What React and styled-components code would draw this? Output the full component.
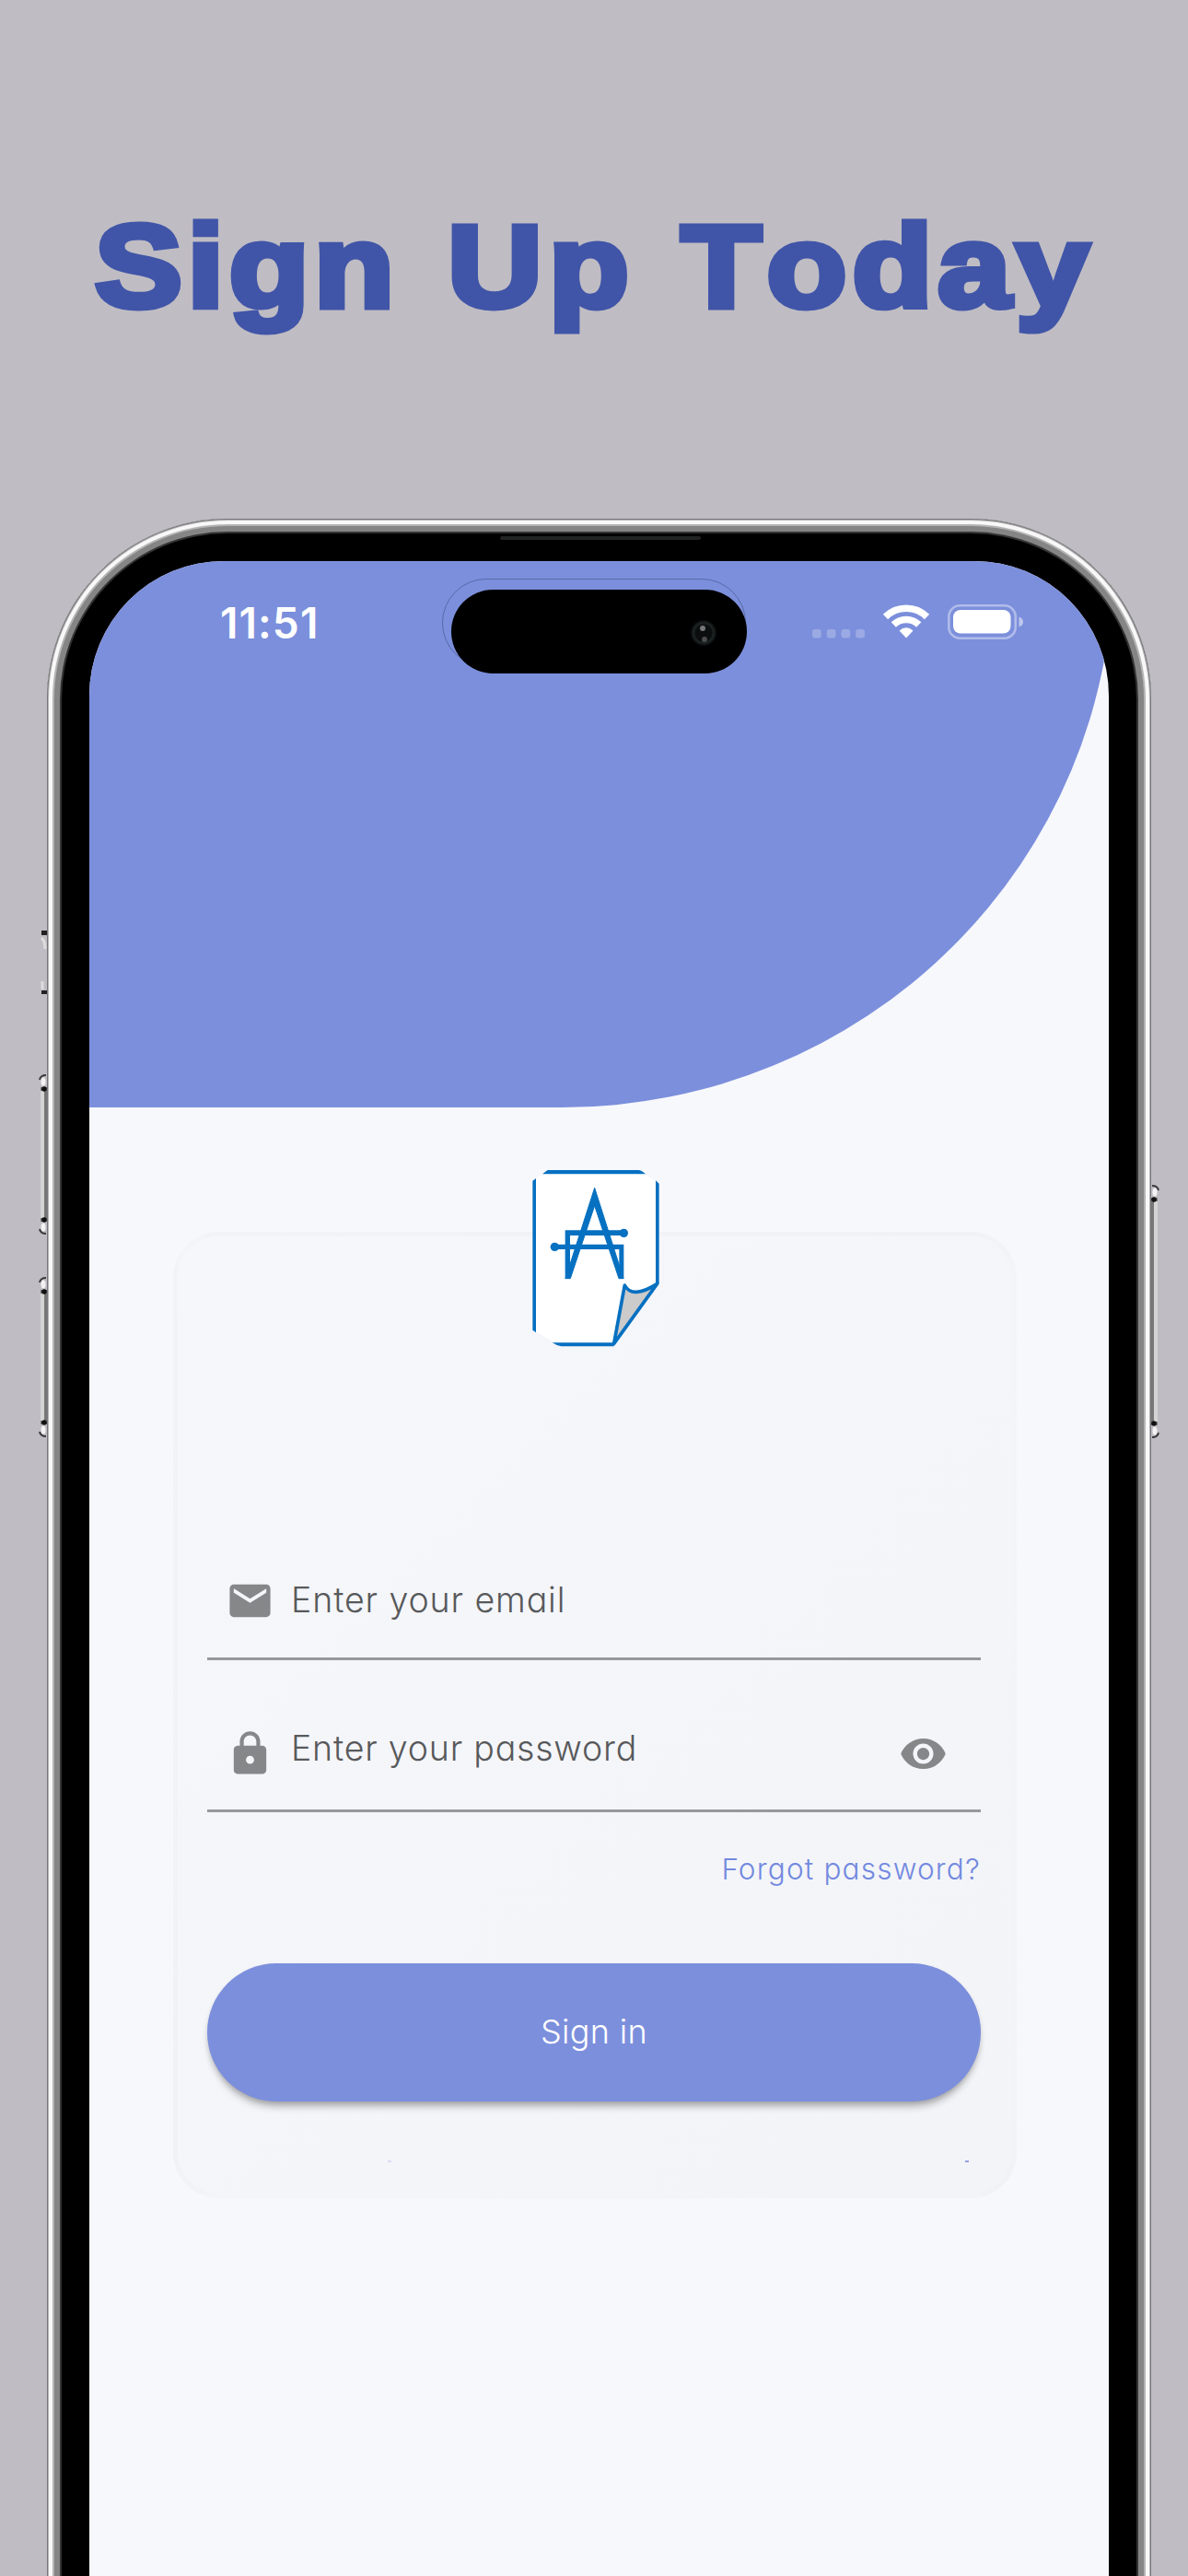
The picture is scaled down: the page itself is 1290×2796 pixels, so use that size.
import React from "react";
import styled, { createGlobalStyle } from "styled-components";
import { MdEmail, MdLock, MdVisibility } from "react-icons/md";

const Global = createGlobalStyle`
  html, body { margin: 0; padding: 0; background: #bfbcc3; }
  * { box-sizing: border-box; }
`;

const Page = styled.main`
  width: 1290px;
  height: 2796px;
  overflow: hidden;
  background: #bfbcc3;
  font-family: Inter, "Liberation Sans", sans-serif;
`;

const Title = styled.h1`
  margin: 0;
  height: 563px;
  padding: 209px 0 0 92px;
  display: flex;
  align-items: flex-start;
  color: #4055a8;
  font-family: "Liberation Sans", Arial, sans-serif;
  font-size: 127px;
  line-height: 160px;
  font-weight: 700;
  font-kerning: none;
  -webkit-text-stroke: 7px #4055a8;
  stroke-linejoin: round;
  transform: scaleX(1.12);
  transform-origin: 0 0;
`;

const Word = styled.span`
  flex: none;
  width: ${(p) => p.$width}px;
  letter-spacing: ${(p) => p.$tracking}px;
  white-space: nowrap;
`;

const Phone = styled.section`
  position: relative;
  width: 1199px;
  height: 2500px;
  margin-left: 51px;
  padding: 46px 46px 0;
  border-radius: 196px 196px 0 0;
  background: #000;
  box-shadow: inset 0 0 0 1px #77767a, inset 0 0 0 2px #b5b5b5, inset 0 0 0 6px #f8f8f8,
    inset 0 0 0 8px #b4b4b4, inset 0 0 0 14px #858585, inset 0 0 0 16px #333;
`;

const Speaker = styled.div`
  position: absolute;
  left: 492px;
  top: 19px;
  width: 218px;
  height: 4px;
  border-radius: 2px;
  background: #222423;
`;

const Key = styled.svg`
  position: absolute;
  ${(p) => (p.$side === "left" ? "left: -9px" : "right: -9px; transform: scaleX(-1)")};
  top: ${(p) => p.$top}px;
`;

const Screen = styled.div`
  width: 1107px;
  height: 2400px;
  overflow: hidden;
  border-radius: 146px 146px 0 0;
  background: #f7f8fc;
`;

const Header = styled.div`
  width: 1112px;
  height: 593px;
  border-bottom-right-radius: 599px 593px;
  background: #7c8fdc;
`;

const StatusBar = styled.div`
  position: relative;
  display: flex;
  height: 130px;
  padding-top: 46px;
`;

const Time = styled.time`
  width: 248px;
  margin-left: 142px;
  color: #fff;
  font-size: 46px;
  line-height: 42px;
  font-weight: 600;
  letter-spacing: 1.1px;
`;

const IslandRing = styled.div`
  position: absolute;
  left: 383px;
  top: 19px;
  width: 330px;
  height: 96px;
  border: 1px solid #5969a8;
  border-radius: 48px;
`;

const Island = styled.div`
  position: relative;
  width: 321px;
  height: 91px;
  margin: -15px 0 0 3px;
  border-radius: 46px;
  background: #000;
`;

const Camera = styled.svg`
  position: absolute;
  left: 256px;
  top: 29px;
`;

const StatusIcons = styled.svg`
  margin-left: 70px;
`;

const Card = styled.div`
  position: relative;
  display: flex;
  flex-direction: column;
  width: 916px;
  height: 1049px;
  margin: 135px 0 0 91px;
  padding: 329px 34px 0 32px;
  border: 5px solid rgba(232, 232, 236, 0.15);
  border-radius: 50px;
  background: linear-gradient(135deg, #f6f7fb, #f3f4f8);
`;

const Logo = styled.svg`
  position: absolute;
  left: 367px;
  top: -92px;
`;

const Field = styled.label`
  display: flex;
  align-items: center;
  height: ${(p) => p.$height}px;
  padding: ${(p) => p.$pad};
  border-bottom: 3px solid #97989c;
  color: #868789;
  svg { flex: none; }
`;

const Hint = styled.span`
  flex: 1;
  margin-left: 18px;
  color: #58595b;
  font-size: 37.5px;
  line-height: 44px;
  font-weight: 330;
  font-feature-settings: "cv11" 1;
  letter-spacing: ${(p) => p.$tracking}px;
  white-space: nowrap;
  transform: translateY(${(p) => p.$shift}px);
`;

const Forgot = styled.a`
  align-self: flex-end;
  margin-top: 43px;
  color: #7389df;
  font-size: 31.5px;
  line-height: 38px;
  font-weight: 330;
  font-feature-settings: "cv11" 1;
  letter-spacing: 1.2px;
`;

const SignIn = styled.button`
  height: 150px;
  margin-top: 83px;
  padding: 0 0 3px;
  border: 0;
  border-radius: 75px;
  background: #7c8fdc;
  box-shadow: 0 8px 9px -3px rgba(0, 0, 0, 0.3), 0 2px 5px rgba(0, 0, 0, 0.08);
  color: #fff;
  font-family: inherit;
  font-size: 36px;
  font-weight: 350;
  letter-spacing: 0.3px;
`;

const Marks = styled.div`
  display: flex;
  justify-content: space-between;
  margin: 64px 13px 0 196px;
`;

const Mark = styled.i`
  width: 4px;
  height: 2px;
  background: ${(p) => p.$color};
`;

function SideKey({ side, top, height: h }) {
  return (
    <Key $side={side} $top={top} width="9" height={h} viewBox={`0 0 9 ${h}`}>
      <rect x="2" y="14" width="7" height={h - 28} fill="#777" />
      <rect x="2" y="18" width="4" height={h - 36} fill="#d4d4d4" />
      <path d="M1 6Q2 1 8 1" fill="none" stroke="#3b3b3b" strokeWidth="2" />
      <ellipse cx="5" cy="8" rx="2.5" ry="4.5" fill="#f2f2f2" />
      <circle cx="6" cy="16" r="2.8" fill="#111" />
      <circle cx="6" cy={h - 16} r="2.8" fill="#111" />
      <ellipse cx="5" cy={h - 8} rx="2.5" ry="4.5" fill="#f2f2f2" />
      <path d={`M1 ${h - 6}Q2 ${h - 1} 8 ${h - 1}`} fill="none" stroke="#3b3b3b" strokeWidth="2" />
    </Key>
  );
}

function MuteSwitch() {
  return (
    <Key $side="left" $top={447} width="9" height="70" viewBox="0 0 9 70">
      <rect x="3" y="0" width="6" height="5" fill="#222" />
      <path d="M3 8Q7 11 7 20" fill="none" stroke="#ddd" strokeWidth="3" />
      <path d="M4 55V64" stroke="#ddd" strokeWidth="3" />
      <rect x="3" y="65" width="6" height="4" fill="#222" />
    </Key>
  );
}

function StatusGlyphs() {
  return (
    <StatusIcons width="232" height="42" viewBox="0 0 232 42">
      <g fill="#fff" opacity="0.24">
        {[1, 16.7, 32.5, 48.2].map((x) => (
          <rect key={x} x={x} y="28" width="9.8" height="9.5" rx="3" />
        ))}
      </g>
      <g fill="none" stroke="#fff" strokeWidth="7.6">
        <path d="M80.500 14.500A32 32 0 0 1 125.500 14.500" />
        <path d="M89.300 23A19.800 19.800 0 0 1 116.700 23" />
      </g>
      <path d="M95.500 29.600Q103 23 110.500 29.600L103 37.500Z" fill="#fff" />
      <rect x="149.300" y="2.300" width="72.400" height="35.400" rx="12" fill="none" stroke="#fff" strokeWidth="2.600" opacity="0.4" />
      <rect x="154" y="7" width="62.500" height="25.500" rx="8" fill="#fff" />
      <path d="M225.500 14.500Q230 16 230 20T225.500 25.500Z" fill="#fff" opacity="0.5" />
    </StatusIcons>
  );
}

function BrandLogo() {
  return (
    <Logo width="180" height="230" viewBox="0 0 540 690">
      <path d="M104 62H405L466 104V430L319 632H148L56 582V94Z" fill="#fff" />
      <g fill="#0670c1">
        <path d="M104 60H402Q415 64 423 73H87Z" />
        <path d="M55 95L66 87V589L55 581Z" />
        <path d="M456 94L467 104V430H456Z" />
        <path d="M119 622H320V634H148Q134 632 119 622Z" />
      </g>
      <path d="M355 435Q379 482 461 430L320 625Z" fill="#cbcbcb" stroke="#0670c1" strokeWidth="11" strokeLinejoin="round" />
      <g fill="#0670c1">
        <path d="M257 118L351 413H336L257 176L178 413H162Z" stroke="#0670c1" strokeWidth="3" />
        <path d="M161 256H352V273H177V414H161Z" />
        <path d="M126 302H352V414H337V318H126Z" />
        <circle cx="352" cy="265" r="14" />
        <circle cx="127" cy="310" r="14" />
      </g>
    </Logo>
  );
}

export default function App() {
  return (
    <Page>
      <Global />
      <Title>
        <Word $width={342} $tracking={5}>Sign</Word>
        <Word $width={226.5} $tracking={6.5}>Up</Word>
        <Word $width={410} $tracking={5.3}>Today</Word>
      </Title>
      <Phone>
        <Speaker />
        <MuteSwitch />
        <SideKey side="left" top={603} height={174} />
        <SideKey side="left" top={823} height={174} />
        <SideKey side="right" top={723} height={275} />
        <Screen>
          <Header>
            <StatusBar>
              <Time>11:51</Time>
              <IslandRing />
              <Island>
                <Camera width="36" height="36" viewBox="0 0 36 36">
                  <circle cx="18" cy="18" r="14" fill="#0b0e0e" />
                  <circle cx="18" cy="18" r="11" fill="none" stroke="#1a1f1f" strokeWidth="3" />
                  <circle cx="17" cy="13" r="3" fill="#777" />
                  <circle cx="19" cy="25" r="3" fill="#4b4b4b" />
                </Camera>
              </Island>
              <StatusGlyphs />
            </StatusBar>
          </Header>
          <Card>
            <BrandLogo />
            <Field $height={131} $pad="4px 0 0 20px">
              <MdEmail size={53} />
              <Hint $tracking={0.9} $shift={0}>Enter your email</Hint>
            </Field>
            <Field $height={165} $pad="40px 36px 0 20px">
              <MdLock size={53} />
              <Hint $tracking={0.8} $shift={-5}>Enter your password</Hint>
              <MdVisibility size={53} />
            </Field>
            <Forgot>Forgot password?</Forgot>
            <SignIn>Sign in</SignIn>
            <Marks>
              <Mark $color="#d9ddf4" />
              <Mark $color="#93a2e2" />
            </Marks>
          </Card>
        </Screen>
      </Phone>
    </Page>
  );
}
